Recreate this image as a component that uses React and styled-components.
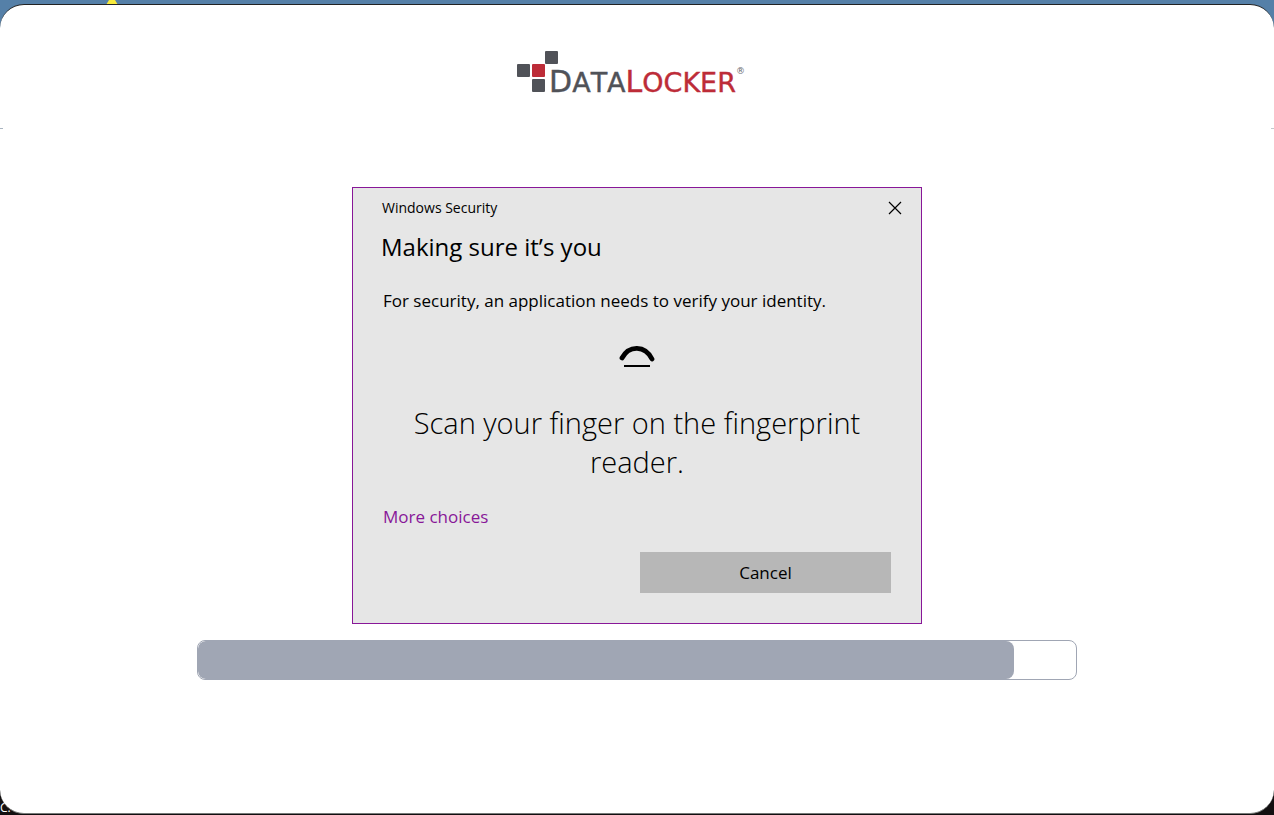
import React from "react";
import styled, { createGlobalStyle } from "styled-components";

const GlobalStyle = createGlobalStyle`
  *, *::before, *::after { box-sizing: border-box; }
  body { margin: 0; }
  h1, h2, p { margin: 0; font-weight: 400; }
`;

const Desktop = styled.div`
  position: relative;
  isolation: isolate;
  overflow: hidden;
  min-height: 100vh;
  padding: 4px 0 1px;
  display: flex;
  flex-direction: column;
  background: linear-gradient(#5580a8 0, #5580a8 50%, #120f10 50%, #120f10 100%);
  font-family: "Segoe UI", "Open Sans", "Noto Sans", sans-serif;
  color: #000;
`;

const DesktopMark = styled.svg`
  position: absolute;
  top: 0;
  left: 106px;
  z-index: -1;
`;

const DesktopLabel = styled.span`
  position: absolute;
  left: 0;
  bottom: 0;
  z-index: -1;
  font-size: 12px;
  line-height: 14px;
  color: #fff;
`;

const Window = styled.main`
  flex: 1;
  display: flex;
  flex-direction: column;
  align-items: center;
  background: #fff;
  border-top: 1px solid #222;
  border-bottom: 1px solid #777a78;
  border-radius: 24px;
`;

const Header = styled.header`
  align-self: stretch;
  display: flex;
  justify-content: center;
  height: 124px;
  padding: 46px 12px 0 0;
  margin-bottom: 58px;
  background:
    linear-gradient(#a9b4c0, #a9b4c0) left bottom / 3px 1px no-repeat,
    linear-gradient(#c4c8cc, #c4c8cc) right bottom / 3px 1px no-repeat;
`;

const Brand = styled.div`
  display: flex;
  align-items: flex-start;
  font-family: "DejaVu Sans", sans-serif;
`;

const BrandBlocks = styled.svg`
  margin-right: -10px;
`;

const Wordmark = styled.span`
  display: block;
  padding-top: 12px;
  font-size: 27px;
  font-kerning: none;
  line-height: 38px;
  color: ${(p) => (p.$accent ? "#bd2c38" : "#505258")};
  -webkit-text-stroke: 0.4px currentColor;

  &::first-letter { font-size: 30px; }
`;

const Registered = styled.span`
  padding-top: 14px;
  font-size: 9px;
  line-height: 12px;
  color: #66686c;
`;

const Dialog = styled.section`
  width: 570px;
  max-width: 100%;
  padding: 8px 30px 30px;
  margin-bottom: 16px;
  display: flex;
  flex-direction: column;
  background: #e6e6e6;
  border: 1px solid #881798;
`;

const TitleBar = styled.div`
  display: flex;
  justify-content: space-between;
  align-items: center;
  height: 24px;
  margin: 0 -16px 11px -1px;
  font-size: 14px;
  line-height: 24px;
`;

const CloseButton = styled.button`
  display: grid;
  place-items: center;
  width: 24px;
  height: 24px;
  padding: 0;
  border: 0;
  background: transparent;
`;

const Heading = styled.h1`
  margin: 0 -2px 22px;
  font-size: 24px;
  line-height: 32px;
`;

const Message = styled.p`
  font-size: 17px;
  line-height: 32px;
`;

const Scanner = styled.svg`
  align-self: center;
  margin: 28px 0 34px;
`;

const Prompt = styled.h2`
  align-self: center;
  max-width: 480px;
  margin-bottom: 24px;
  font-size: 29px;
  font-weight: 300;
  line-height: 39px;
  text-align: center;
`;

const MoreLink = styled.a`
  align-self: flex-start;
  margin-bottom: 23px;
  font-size: 17px;
  line-height: 24px;
  color: #881798;
  text-decoration: none;
`;

const CancelButton = styled.button`
  align-self: flex-end;
  width: 251px;
  height: 41px;
  padding: 0;
  border: 0;
  background: #b7b7b7;
  color: #000;
  font-family: inherit;
  font-size: 17px;
  line-height: 41px;
`;

const Progress = styled.div`
  width: 69%;
  height: 40px;
  border: 1px solid #a0a6b4;
  border-radius: 8px;
  overflow: hidden;
`;

const ProgressFill = styled.div`
  height: 100%;
  border-radius: 8px;
  background: #a0a6b4;
`;

const progress = 93;

export default function App() {
  return (
    <Desktop>
      <GlobalStyle />
      <DesktopMark width="12" height="5" viewBox="0 0 12 5" aria-hidden="true">
        <path d="M3 0H9L12 5H0Z" fill="#f7ea3d" />
      </DesktopMark>
      <DesktopLabel>C.</DesktopLabel>
      <Window>
        <Header>
          <Brand>
            <BrandBlocks width="42" height="42" viewBox="0 0 42 42" aria-hidden="true">
              <rect x="28" y="0" width="13" height="13" rx="1" fill="#505258" />
              <rect x="0" y="13" width="13" height="13" rx="1" fill="#505258" />
              <rect x="15" y="13" width="13" height="13" rx="1" fill="#bd2c38" />
              <rect x="15" y="28" width="13" height="13" rx="1" fill="#505258" />
            </BrandBlocks>
            <Wordmark>DATA</Wordmark>
            <Wordmark $accent>LOCKER</Wordmark>
            <Registered>®</Registered>
          </Brand>
        </Header>
        <Dialog role="dialog" aria-labelledby="dialog-title">
          <TitleBar>
            <span>Windows Security</span>
            <CloseButton type="button" aria-label="Close">
              <svg width="14" height="14" viewBox="0 0 14 14" aria-hidden="true">
                <path d="M1 1L13 13M13 1L1 13" stroke="#000" strokeWidth="1.2" />
              </svg>
            </CloseButton>
          </TitleBar>
          <Heading id="dialog-title">Making sure it’s you</Heading>
          <Message>For security, an application needs to verify your identity.</Message>
          <Scanner width="36" height="24" viewBox="0 0 36 24" aria-hidden="true">
            <path d="M3 13C10 0 26 0 33 14" fill="none" stroke="#000" strokeWidth="4.8" strokeLinecap="round" />
            <path d="M5 21H31" stroke="#000" strokeWidth="2" />
          </Scanner>
          <Prompt>Scan your finger on the fingerprint reader.</Prompt>
          <MoreLink href="#choices">More choices</MoreLink>
          <CancelButton type="button">Cancel</CancelButton>
        </Dialog>
        <Progress role="progressbar" aria-label="Progress" aria-valuenow={progress} aria-valuemin={0} aria-valuemax={100}>
          <ProgressFill style={{ width: `${progress}%` }} />
        </Progress>
      </Window>
    </Desktop>
  );
}
